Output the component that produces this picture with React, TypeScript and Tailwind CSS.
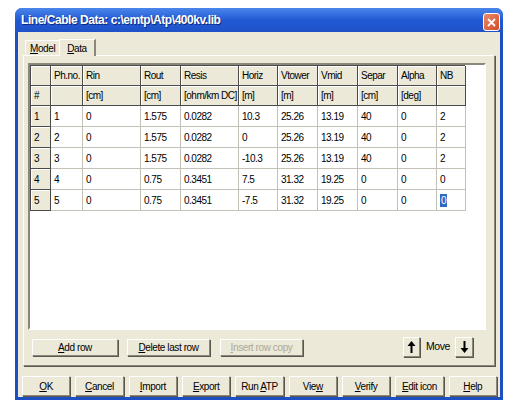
import React from "react";

const COLS =
  "grid grid-cols-[20px_32px_58px_40px_58px_39px_40px_40px_40px_39px_29px]";

const headTop = ["", "Ph.no.", "Rin", "Rout", "Resis", "Horiz", "Vtower", "Vmid", "Separ", "Alpha", "NB"];
const headUnits = ["#", "", "[cm]", "[cm]", "[ohm/km DC]", "[m]", "[m]", "[m]", "[cm]", "[deg]", ""];

const rows = [
  ["1", "1", "0", "1.575", "0.0282", "10.3", "25.26", "13.19", "40", "0", "2"],
  ["2", "2", "0", "1.575", "0.0282", "0", "25.26", "13.19", "40", "0", "2"],
  ["3", "3", "0", "1.575", "0.0282", "-10.3", "25.26", "13.19", "40", "0", "2"],
  ["4", "4", "0", "0.75", "0.3451", "7.5", "31.32", "19.25", "0", "0", "0"],
  ["5", "5", "0", "0.75", "0.3451", "-7.5", "31.32", "19.25", "0", "0", "0"],
];

const Btn = ({
  children,
  className = "",
  disabled = false,
}: {
  children: React.ReactNode;
  className?: string;
  disabled?: boolean;
}) => (
  <div
    className={`flex items-center justify-center bg-[#ece9d8] border border-t-white border-l-white border-r-[#8a877a] border-b-[#8a877a] shadow-[1px_1px_0_#5a584e] ${
      disabled ? "text-[#aca899]" : "text-black"
    } ${className}`}
  >
    <span className="whitespace-pre">{children}</span>
  </div>
);

const HeadCell = ({ text }: { text: string }) => (
  <div className="h-[20px] flex items-center pl-[3px] bg-[#ece9d8] border-r border-b border-[#4a4a4a] shadow-[inset_1px_1px_0_#fff] whitespace-nowrap overflow-hidden">
    {text}
  </div>
);

const DataRow = ({ cells, last }: { cells: string[]; last: boolean }) => (
  <div className={COLS}>
    {cells.map((c, i) =>
      i === 0 ? (
        <div
          key={i}
          className="h-[21px] flex items-center pl-[3px] bg-[#ece9d8] border-r border-b border-[#4a4a4a] shadow-[inset_1px_1px_0_#fff]"
        >
          {c}
        </div>
      ) : (
        <div
          key={i}
          className="h-[21px] flex items-center pl-[3px] bg-white border-r border-b border-[#c4c2b8] whitespace-nowrap"
        >
          {last && i === 10 ? (
            <span className="bg-[#316ac5] text-white px-[1px] leading-[13px]">{c}</span>
          ) : (
            c
          )}
        </div>
      )
    )}
  </div>
);

// thin arrow, like the bitmap on the Move buttons
const Arrow = ({ up }: { up?: boolean }) => (
  <svg width="9" height="12" viewBox="0 0 9 12" className={up ? "" : "rotate-180"}>
    <path d="M4.5 0 L8.5 5 L5.5 5 L5.5 12 L3.5 12 L3.5 5 L0.5 5 Z" fill="#000" />
  </svg>
);

export default function App() {
  return (
    <div
      className="w-[524px] h-[411px] bg-white overflow-hidden pt-[8px] pl-[15px]"
      style={{ fontFamily: '"Liberation Sans", Arial, sans-serif' }}
    >
      <div className="w-[488px] h-[392px] flex flex-col rounded-t-[7px] overflow-hidden bg-[#1c4fc4]">
        {/* title bar */}
        <div className="h-[24px] shrink-0 flex items-center justify-between pl-[6px] pr-[3px] bg-linear-to-b from-[#4a86ea] via-[#2159d4] to-[#1f52c8]">
          <span className="text-white font-bold text-[12px] tracking-[-0.45px] [text-shadow:1px_1px_0_#0c2a80]">
            Line/Cable Data: c:\emtp\Atp\400kv.lib
          </span>
          <div className="w-[17px] h-[18px] mt-[4px] rounded-[3px] border border-white bg-linear-to-br from-[#e98a6c] to-[#d34a22] flex items-center justify-center">
            <svg width="9" height="9" viewBox="0 0 9 9">
              <path d="M1 1 L8 8 M8 1 L1 8" stroke="#fff" strokeWidth="1.8" />
            </svg>
          </div>
        </div>

        {/* client */}
        <div className="flex-1 mx-[3px] mb-[3px] bg-[#ece9d8] flex flex-col text-[10px] tracking-[-0.4px] text-black">
          {/* tabs */}
          <div className="flex items-end h-[23px] pl-[7px]">
            <div className="h-[15px] px-[4px] flex items-center border-t border-l border-white">
              <u>M</u>odel
            </div>
            <div className="h-[17px] px-[7px] flex items-center border-t border-l border-white border-r-2 border-r-[#8a877a] bg-[#ece9d8] -mb-px relative z-10">
              <u>D</u>ata
            </div>
          </div>

          {/* tab page */}
          <div className="mx-[5px] h-[311px] border border-t-white border-l-white border-r-[#8a877a] border-b-[#8a877a] shadow-[1px_1px_0_#5a584e] flex flex-col pl-[4px] pr-[8px] pt-[7px]">
            <div className="h-[267px] border-2 border-t-[#8a877a] border-l-[#8a877a] border-r-white border-b-white bg-white">
              <div className="w-[435px] border-t border-l border-[#4a4a4a] tracking-[-0.5px]">
                <div className={COLS}>
                  {headTop.map((h, i) => (
                    <HeadCell key={i} text={h} />
                  ))}
                </div>
                <div className={COLS}>
                  {headUnits.map((h, i) => (
                    <HeadCell key={i} text={h} />
                  ))}
                </div>
                {rows.map((r, i) => (
                  <DataRow key={i} cells={r} last={i === rows.length - 1} />
                ))}
              </div>
            </div>

            <div className="flex items-center mt-[7px] pl-[4px]">
              <Btn className="w-[86px] h-[17px]">
                <u>A</u>dd row
              </Btn>
              <Btn className="w-[83px] h-[17px] ml-[9px]">
                <u>D</u>elete last row
              </Btn>
              <Btn className="w-[83px] h-[17px] ml-[10px]" disabled>
                <u>I</u>nsert row copy
              </Btn>
              <div className="flex-1" />
              <Btn className="w-[17px] h-[20px]">
                <Arrow up />
              </Btn>
              <span className="ml-[6px] mr-[5px] text-[10.5px]">Move</span>
              <Btn className="w-[18px] h-[20px] mr-[13px]">
                <Arrow />
              </Btn>
            </div>
          </div>

          {/* bottom buttons */}
          <div className="flex gap-[5px] pl-[4px] pr-[3px] mt-[10px]">
            <Btn className="flex-1 h-[20px]"><u>O</u>K</Btn>
            <Btn className="flex-1 h-[20px]"><u>C</u>ancel</Btn>
            <Btn className="flex-1 h-[20px]"><u>I</u>mport</Btn>
            <Btn className="flex-1 h-[20px]"><u>E</u>xport</Btn>
            <Btn className="flex-1 h-[20px]">Run <u>A</u>TP</Btn>
            <Btn className="flex-1 h-[20px]">Vie<u>w</u></Btn>
            <Btn className="flex-1 h-[20px]"><u>V</u>erify</Btn>
            <Btn className="flex-1 h-[20px]"><u>E</u>dit icon</Btn>
            <Btn className="flex-1 h-[20px]"><u>H</u>elp</Btn>
          </div>
        </div>
      </div>
    </div>
  );
}
